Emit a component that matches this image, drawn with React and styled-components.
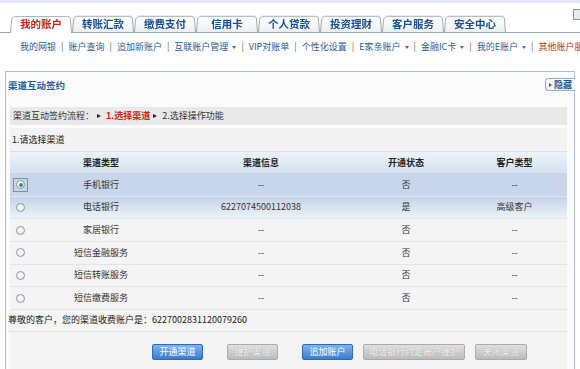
import React from 'react';
import styled, { createGlobalStyle, css } from 'styled-components';

const GlobalStyle = createGlobalStyle`
  html, body {
    margin: 0;
    padding: 0;
    background: #fff;
  }
  body {
    width: 580px;
    height: 369px;
    overflow: hidden;
    font-family: "Noto Sans CJK SC", "Liberation Sans", sans-serif;
    font-size: 9px;
    line-height: 12px;
    color: #333;
  }
  * { box-sizing: border-box; }
`;

const COLS = '20px 142px 178px 112px 105px';

const Page = styled.div`
  width: 580px;
  height: 369px;
  overflow: hidden;
`;

const TopStrip = styled.div`
  height: 3px;
  background: #dfe9f5;
`;

const TabBar = styled.div`
  position: relative;
  height: 30px;
  display: flex;
  align-items: flex-end;
  padding-left: 10px;
  border-bottom: 1px solid #9da7b1;
`;

const Tab = styled.div`
  position: relative;
  z-index: ${p => (p.$active ? 2 : 1)};
  width: 62px;
  height: ${p => (p.$active ? 18 : 17)}px;
  margin-bottom: ${p => (p.$active ? -1 : 0)}px;
  display: flex;
  align-items: center;
  justify-content: center;
  font-size: 10.5px;
  font-weight: bold;
  color: ${p => (p.$active ? '#c3261c' : '#1a4f8c')};

  &::before {
    content: '';
    position: absolute;
    inset: 0 0 0 0;
    z-index: -1;
    border: 1px solid #a2a8ae;
    border-bottom: none;
    border-radius: 5px 4px 0 0;
    background: ${p => (p.$active ? '#fff' : 'linear-gradient(#ffffff, #eceff2)')};
    transform: perspective(40px) rotateX(6deg);
    transform-origin: bottom;
  }
`;

const CornerBox = styled.div`
  position: absolute;
  right: -3px;
  top: 6px;
  width: 10px;
  height: 11px;
  border: 1px solid #8d969e;
  border-right: none;
  background: #e8ebe6;
`;

const SubNav = styled.div`
  height: 28px;
  display: flex;
  align-items: center;
  padding-left: 20px;
  white-space: nowrap;
  overflow: hidden;
  color: #2a5d96;
`;

const NavItem = styled.span`
  display: inline-flex;
  align-items: center;
  flex-shrink: 0;
  color: ${p => (p.$red ? '#b0361f' : '#2a5d96')};
`;

const DropArrow = styled.i`
  display: inline-block;
  margin-left: 4px;
  border-top: 3px solid #666;
  border-left: 2.5px solid transparent;
  border-right: 2.5px solid transparent;
`;

const NavSep = styled.span`
  flex-shrink: 0;
  padding: 0 5px;
  color: #666;
`;

const Panel = styled.div`
  margin: 10px 0 0 5px;
  width: 570px;
  height: 300px;
  border: 1px solid #a9c0d8;
  border-bottom: none;
  background: #fbfbfb;
`;

const PanelHead = styled.div`
  height: 35px;
  display: flex;
  justify-content: space-between;
  align-items: flex-start;
  padding: 6px 0 0 2px;
`;

const PanelTitle = styled.div`
  font-size: 9.5px;
  line-height: 14px;
  font-weight: bold;
  color: #1f5e9d;
`;

const HideButton = styled.div`
  display: flex;
  align-items: center;
  gap: 2px;
  height: 13px;
  margin-right: -1px;
  padding: 0 3px 0 3px;
  border: 1px solid #93b1cf;
  border-right: none;
  border-radius: 3px 0 0 3px;
  background: linear-gradient(#ffffff, #eef3f8);
  font-weight: bold;
  color: #1f5e9d;

  &::before {
    content: '';
    border-left: 3px solid #1f5e9d;
    border-top: 2px solid transparent;
    border-bottom: 2px solid transparent;
  }
`;

const PanelBody = styled.div`
  padding: 0 7px 0 4px;
`;

const FlowBar = styled.div`
  height: 18px;
  display: flex;
  align-items: center;
  padding-left: 3px;
  background: #e9e9e9;
  color: #333;
`;

const FlowArrow = styled.i`
  display: inline-block;
  margin: 0 5px 0 3px;
  border-left: 4px solid #222;
  border-top: 2.5px solid transparent;
  border-bottom: 2.5px solid transparent;
`;

const FlowStep = styled.span`
  color: ${p => (p.$current ? '#c9281c' : '#333')};
  font-weight: ${p => (p.$current ? 'bold' : 'normal')};
`;

const SectionLabel = styled.div`
  margin-top: 3px;
  height: 23px;
  display: flex;
  align-items: center;
  padding-left: 2px;
  background: #f3f3f3;
  color: #222;
`;

const HeadRow = styled.div`
  display: grid;
  grid-template-columns: ${COLS};
  height: 23px;
  align-items: center;
  justify-items: center;
  border-top: 1px solid #d6e1ee;
  border-bottom: 1px solid #c7d5e6;
  background: linear-gradient(#eef3fa, #d3e0f0);
  font-weight: bold;
  color: #222;
`;

const rowBg = {
  selected: '#c7d6ea',
  hover: 'linear-gradient(#c3d3e9, #eef2f7)',
  plain: '#f4f4f4',
};

const Row = styled.div`
  display: grid;
  grid-template-columns: ${COLS};
  height: 22.67px;
  align-items: center;
  justify-items: center;
  border-bottom: 1px solid #dfe5ed;
  background: ${p => rowBg[p.$state]};
  color: #333;
`;

const RadioBox = styled.span`
  display: flex;
  align-items: center;
  justify-content: center;
  width: 15px;
  height: 14px;
  margin-left: 1px;
  border: 1px solid ${p => (p.$focused ? '#7f90a5' : 'transparent')};
`;

const Radio = styled.span`
  position: relative;
  width: 9px;
  height: 9px;
  border-radius: 50%;
  border: 1px solid #8798ae;
  background: radial-gradient(circle at 40% 35%, #ffffff, #dfe5ec);

  ${p => p.$checked && css`
    &::after {
      content: '';
      position: absolute;
      left: 1.5px;
      top: 1.5px;
      width: 4px;
      height: 4px;
      border-radius: 50%;
      background: #3f9a3c;
    }
  `}
`;

const Notice = styled.div`
  height: 22px;
  display: flex;
  align-items: center;
  margin-left: -2px;
  border-bottom: 1px solid #dfe5ed;
  background: #f4f4f4;
  color: #222;
`;

const Actions = styled.div`
  height: 40px;
  display: flex;
  align-items: flex-start;
  padding: 12px 0 0 142px;
  background: #f4f4f4;
`;

const ButtonGroup = styled.div`
  display: flex;
  gap: ${p => p.$gap}px;
  margin-left: ${p => p.$offset || 0}px;
`;

const ActionButton = styled.button`
  width: ${p => p.$w}px;
  height: 16px;
  padding: 0;
  border-radius: 2px;
  border: 1px solid #2d6bb6;
  background: linear-gradient(#7db4ef, #3a7dcf);
  color: #fff;
  font-family: "Noto Sans CJK SC", sans-serif;
  font-size: 9px;
  line-height: 14px;

  &:disabled {
    border-color: #aaaaaa;
    background: linear-gradient(#e0e0e0, #bcbcbc);
    color: #f4f4f4;
    text-shadow: 0 0 1px #999;
  }
`;

const tabs = ['我的账户', '转账汇款', '缴费支付', '信用卡', '个人贷款', '投资理财', '客户服务', '安全中心'];

const navItems = [
  { label: '我的网银' },
  { label: '账户查询' },
  { label: '追加新账户' },
  { label: '互联账户管理', drop: true },
  { label: 'VIP对账单' },
  { label: '个性化设置' },
  { label: 'E家亲账户', drop: true },
  { label: '金融IC卡', drop: true },
  { label: '我的E账户', drop: true },
  { label: '其他账户服', red: true },
];

const channels = [
  { type: '手机银行', info: '--', open: '否', cust: '--', state: 'selected', checked: true },
  { type: '电话银行', info: '6227074500112038', open: '是', cust: '高级客户', state: 'hover' },
  { type: '家居银行', info: '--', open: '否', cust: '--', state: 'plain' },
  { type: '短信金融服务', info: '--', open: '否', cust: '--', state: 'plain' },
  { type: '短信转账服务', info: '--', open: '否', cust: '--', state: 'plain' },
  { type: '短信缴费服务', info: '--', open: '否', cust: '--', state: 'plain' },
];

const App = () => (
  <Page>
    <GlobalStyle />
    <TopStrip />
    <TabBar>
      {tabs.map((t, i) => (
        <Tab key={t} $active={i === 0}>{t}</Tab>
      ))}
      <CornerBox />
    </TabBar>
    <SubNav>
      {navItems.map((n, i) => (
        <React.Fragment key={n.label}>
          {i > 0 && <NavSep>|</NavSep>}
          <NavItem $red={n.red}>
            {n.label}
            {n.drop && <DropArrow />}
          </NavItem>
        </React.Fragment>
      ))}
    </SubNav>
    <Panel>
      <PanelHead>
        <PanelTitle>渠道互动签约</PanelTitle>
        <HideButton>隐藏</HideButton>
      </PanelHead>
      <PanelBody>
        <FlowBar>
          渠道互动签约流程：
          <FlowArrow />
          <FlowStep $current>1.选择渠道</FlowStep>
          <FlowArrow />
          <FlowStep>2.选择操作功能</FlowStep>
        </FlowBar>
        <SectionLabel>1.请选择渠道</SectionLabel>
        <HeadRow>
          <span />
          <span>渠道类型</span>
          <span>渠道信息</span>
          <span>开通状态</span>
          <span>客户类型</span>
        </HeadRow>
        {channels.map(c => (
          <Row key={c.type} $state={c.state}>
            <RadioBox $focused={c.checked}>
              <Radio $checked={c.checked} />
            </RadioBox>
            <span>{c.type}</span>
            <span>{c.info}</span>
            <span>{c.open}</span>
            <span>{c.cust}</span>
          </Row>
        ))}
        <Notice>尊敬的客户，您的渠道收费账户是：6227002831120079260</Notice>
        <Actions>
          <ButtonGroup $gap={24}>
            <ActionButton $w={51}>开通渠道</ActionButton>
            <ActionButton $w={51} disabled>维护渠道</ActionButton>
            <ActionButton $w={51}>追加账户</ActionButton>
          </ButtonGroup>
          <ButtonGroup $gap={10} $offset={10}>
            <ActionButton $w={102} disabled>电话银行约定账户维护</ActionButton>
            <ActionButton $w={52} disabled>关闭渠道</ActionButton>
          </ButtonGroup>
        </Actions>
      </PanelBody>
    </Panel>
  </Page>
);

export default App;
